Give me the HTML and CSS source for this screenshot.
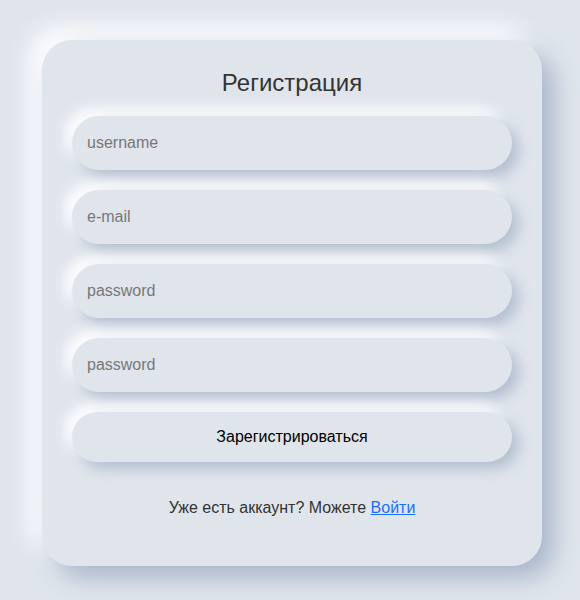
FILE: index.html
```html
<!DOCTYPE html>
<html lang="ru">
<head>
<meta charset="utf-8">
<title>Регистрация</title>
<link rel="stylesheet" href="styles.css">
</head>
<body>
<div class="page">
  <form class="card">
    <h2 class="title">Регистрация</h2>
    <input class="field" type="text" placeholder="username">
    <input class="field" type="email" placeholder="e-mail">
    <input class="field" type="password" placeholder="password">
    <input class="field" type="password" placeholder="password">
    <button class="btn" type="button">Зарегистрироваться</button>
    <p class="footer">Уже есть аккаунт? Можете <a href="#" class="link">Войти</a></p>
  </form>
</div>
</body>
</html>
```
FILE: styles.css
```css
* { box-sizing: border-box; }
html, body { margin: 0; padding: 0; }
body {
  background: #e0e5ec;
  font-family: "Liberation Sans", Arial, sans-serif;
  width: 580px;
  height: 600px;
  overflow: hidden;
}
.page {
  padding: 40px 0 0 42px;
}
.card {
  width: 500px;
  height: 526px;
  background: #e0e5ec;
  border-radius: 30px;
  box-shadow: 12px 12px 24px #a9b6ca, -12px -12px 24px #ffffff;
  padding: 29px 30px 0 30px;
  display: flex;
  flex-direction: column;
  gap: 20px;
}
.title {
  margin: 0 0 -1px 0;
  font-weight: normal;
  font-size: 24px;
  line-height: 28px;
  color: #333;
  text-align: center;
}
.field {
  height: 54px;
  width: 440px;
  border: none;
  outline: none;
  border-radius: 27px;
  background: #e0e5ec;
  box-shadow: 7px 7px 14px #b3bfd0, -7px -7px 14px #ffffff;
  padding: 0 15px;
  font-family: "Liberation Sans", Arial, sans-serif;
  font-size: 16px;
  color: #333;
}
.field::placeholder { color: #777; }
.btn {
  height: 50px;
  width: 440px;
  border: none;
  border-radius: 25px;
  background: #e0e5ec;
  box-shadow: 7px 7px 14px #b3bfd0, -7px -7px 14px #ffffff;
  font-family: "Liberation Sans", Arial, sans-serif;
  font-size: 16px;
  line-height: 18px;
  padding: 0;
  color: #000;
  cursor: pointer;
}
.footer {
  margin: 16px 0 0 0;
  text-align: center;
  font-size: 16px;
  line-height: 20px;
  color: #333;
}
.link {
  color: #1a6dff;
  text-decoration: underline;
}
```
